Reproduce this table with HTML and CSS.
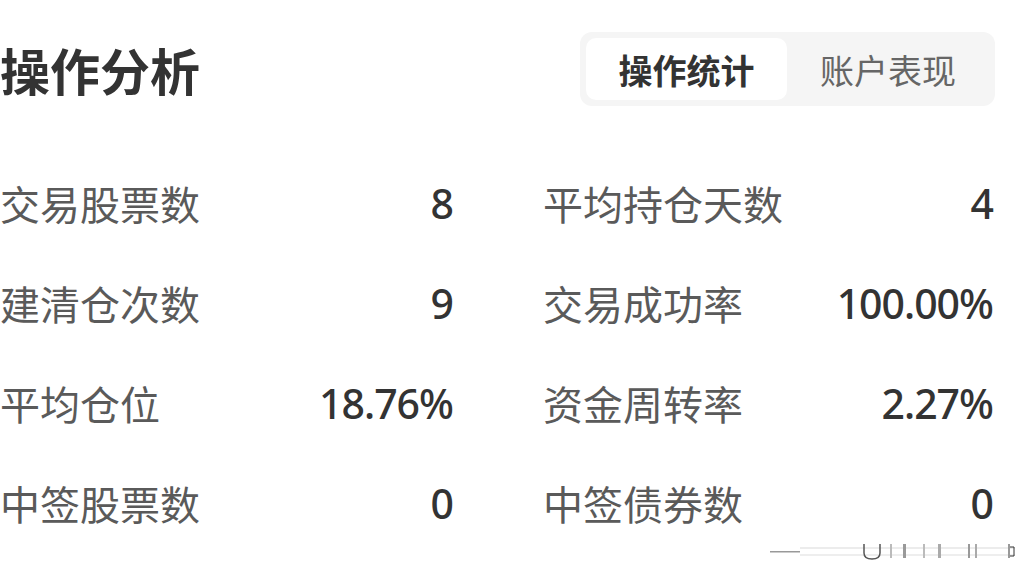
FILE: index.html
```html
<!DOCTYPE html>
<html lang="zh">
<head>
<meta charset="utf-8">
<link rel="stylesheet" href="styles.css">
</head>
<body>
<div class="page">
  <header class="header">
    <h1 class="title">操作分析</h1>
    <div class="seg">
      <div class="tab active">操作统计</div>
      <div class="tab">账户表现</div>
    </div>
  </header>
  <section class="grid">
    <div class="item"><span class="label">交易股票数</span><span class="value">8</span></div>
    <div class="item"><span class="label">平均持仓天数</span><span class="value">4</span></div>
    <div class="item"><span class="label">建清仓次数</span><span class="value">9</span></div>
    <div class="item"><span class="label">交易成功率</span><span class="value">100.00%</span></div>
    <div class="item"><span class="label">平均仓位</span><span class="value">18.76%</span></div>
    <div class="item"><span class="label">资金周转率</span><span class="value">2.27%</span></div>
    <div class="item"><span class="label">中签股票数</span><span class="value">0</span></div>
    <div class="item"><span class="label">中签债券数</span><span class="value">0</span></div>
  </section>
  <svg class="mark" width="250" height="20" viewBox="0 0 250 20">
    <rect x="30" y="5" width="215" height="2" fill="#ececec"/>
    <rect x="30" y="12" width="215" height="2" fill="#eeeeee"/>
    <rect x="0" y="9" width="30" height="1.5" fill="#999"/>
    <path d="M94 2 V11 Q94 17 102 17 Q110 17 110 11 V2" fill="none" stroke="#555" stroke-width="1.5"/>
    <rect x="120" y="2" width="2" height="14" fill="#bbb"/>
    <rect x="133" y="2" width="3" height="14" fill="#999"/>
    <rect x="153" y="2" width="2" height="14" fill="#bbb"/>
    <rect x="168" y="2" width="3" height="14" fill="#aaa"/>
    <rect x="198" y="2" width="2" height="14" fill="#999"/>
    <rect x="205" y="2" width="2" height="14" fill="#aaa"/>
    <rect x="238" y="2" width="2" height="14" fill="#999"/>
    <path d="M240 5 H244 V14 H240" fill="none" stroke="#333" stroke-width="1"/>
  </svg>
</div>
</body>
</html>
```
FILE: styles.css
```css
html, body {
  margin: 0;
  padding: 0;
  background: #fff;
}
body {
  font-family: "Noto Sans CJK SC", "Noto Sans", sans-serif;
  color: #333;
}
.page {
  position: relative;
  width: 1030px;
  height: 580px;
  overflow: hidden;
}
.header {
  width: 995px;
  padding-top: 32px;
  display: flex;
  justify-content: space-between;
  align-items: center;
}
.title {
  margin: 0;
  font-size: 50px;
  font-weight: 700;
  line-height: 74px;
  color: #333;
}
.seg {
  display: flex;
  width: 415px;
  height: 74px;
  box-sizing: border-box;
  padding: 6px;
  background: #f5f5f5;
  border-radius: 12px;
}
.tab {
  flex: 1;
  display: flex;
  align-items: center;
  justify-content: center;
  font-size: 34px;
  color: #666;
  border-radius: 10px;
}
.tab.active {
  background: #fff;
  color: #333;
  font-weight: 700;
  flex: 0 0 201px;
}
.grid {
  width: 993px;
  margin-top: 67px;
  display: grid;
  grid-template-columns: 453px 450px;
  column-gap: 90px;
  row-gap: 40px;
}
.item {
  display: flex;
  justify-content: space-between;
  align-items: center;
  height: 60px;
}
.label {
  font-size: 40px;
  color: #5a5a5a;
}
.value {
  font-size: 41px;
  font-weight: 500;
  letter-spacing: -1px;
  color: #333;
  font-family: "Noto Sans", "Noto Sans CJK SC", sans-serif;
}
.mark {
  position: absolute;
  left: 770px;
  top: 542px;
}
```
